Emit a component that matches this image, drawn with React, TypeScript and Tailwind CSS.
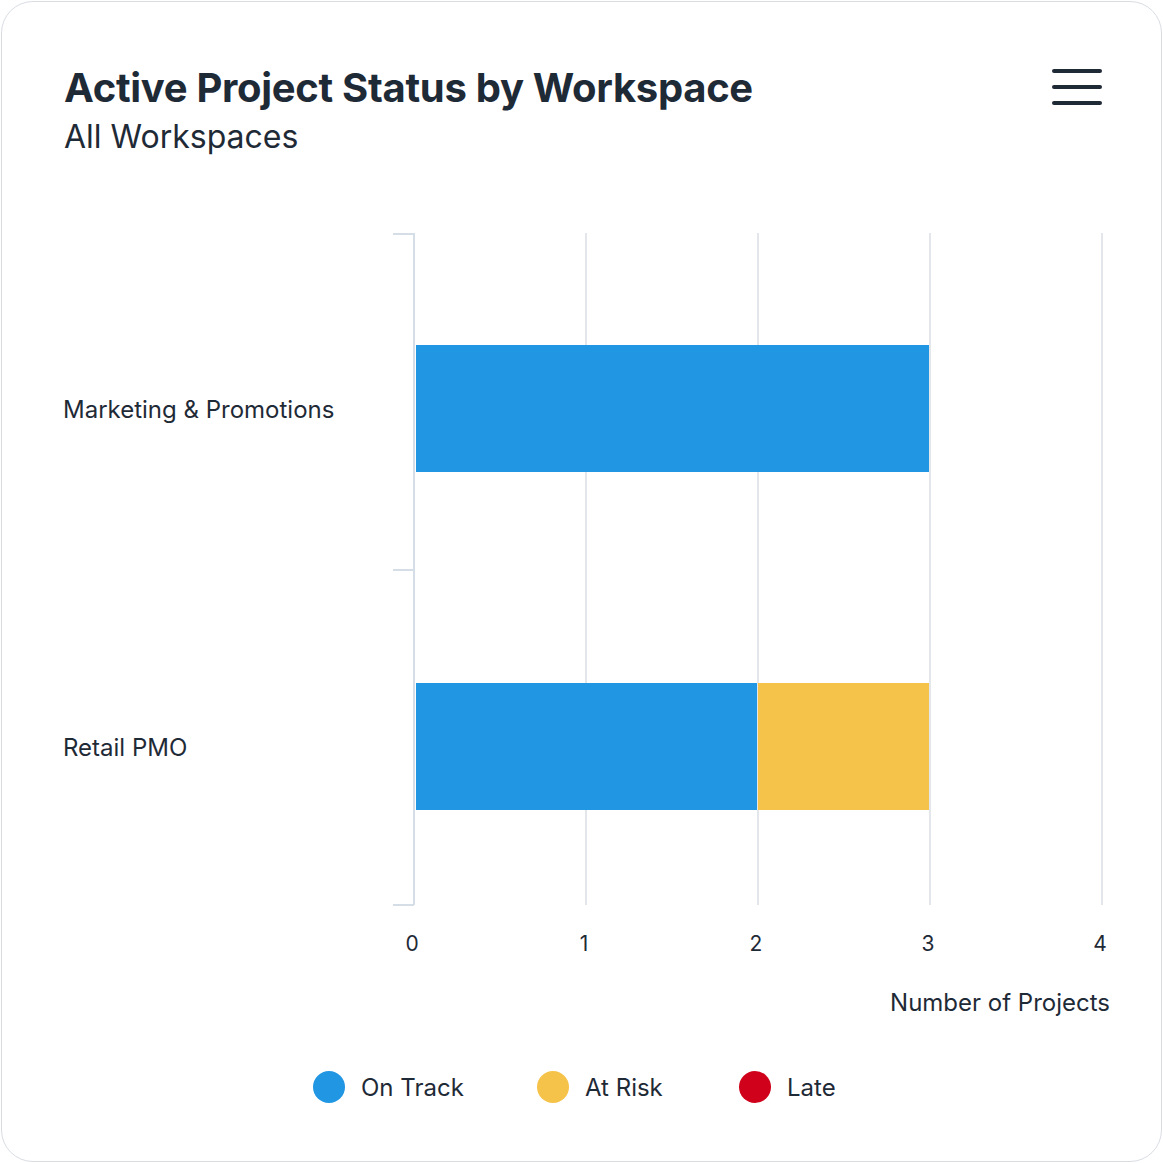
export default function App() {
  const txt = "#1f2a37";
  return (
    <div className="w-[1163px] h-[1163px] bg-white p-px" style={{ fontFamily: "Inter, sans-serif" }}>
      <div className="relative w-[1161px] h-[1161px] rounded-[32px] border border-[#d9dde3] bg-white">
        <div className="flex justify-between pl-[62px] pr-[59px] pt-[58px]">
          <div>
            <div className="text-[40px] font-bold leading-[56px] tracking-[-0.3px] text-[#1f2a37]">Active Project Status by Workspace</div>
            <div className="text-[32px] leading-[40px] mt-[1px] text-[#1f2a37]">All Workspaces</div>
          </div>
          <div className="flex flex-col gap-[12px] mt-[9px]">
            <div className="w-[50px] h-[4px] rounded bg-[#1f2a37]" />
            <div className="w-[50px] h-[4px] rounded bg-[#1f2a37]" />
            <div className="w-[50px] h-[4px] rounded bg-[#1f2a37]" />
          </div>
        </div>
        <svg className="absolute left-0 top-0" width="1161" height="1161" viewBox="1 1 1161 1161">
          {[585, 757, 929, 1101].map((x) => (
            <line key={x} x1={x} y1={232} x2={x} y2={904} stroke="#e3e6ea" strokeWidth="2" />
          ))}
          <line x1={413} y1={232} x2={413} y2={904} stroke="#d5dde6" strokeWidth="2" />
          {[233, 569, 904].map((y) => (
            <line key={y} x1={392} y1={y} x2={413} y2={y} stroke="#d5dde6" strokeWidth="2" />
          ))}
          <rect x={415} y={344} width={513} height={127} fill="#2196e3" />
          <rect x={415} y={682} width={341} height={127} fill="#2196e3" />
          <rect x={757} y={682} width={171} height={127} fill="#f6c34a" />
          <g fontFamily="Inter, sans-serif" fill={txt}>
            <text x={62} y={417} fontSize="24">Marketing &amp; Promotions</text>
            <text x={62} y={755} fontSize="24">Retail PMO</text>
            {[0, 1, 2, 3, 4].map((v) => (
              <text key={v} x={411 + v * 172} y={950} fontSize="21" textAnchor="middle">{v}</text>
            ))}
            <text x={1109} y={1010} fontSize="24" textAnchor="end">Number of Projects</text>
            <circle cx={328} cy={1086} r={16} fill="#2196e3" />
            <text x={360} y={1095} fontSize="24">On Track</text>
            <circle cx={552} cy={1086} r={16} fill="#f6c34a" />
            <text x={584} y={1095} fontSize="24">At Risk</text>
            <circle cx={754} cy={1086} r={16} fill="#d0021b" />
            <text x={786} y={1095} fontSize="24">Late</text>
          </g>
        </svg>
      </div>
    </div>
  );
}
